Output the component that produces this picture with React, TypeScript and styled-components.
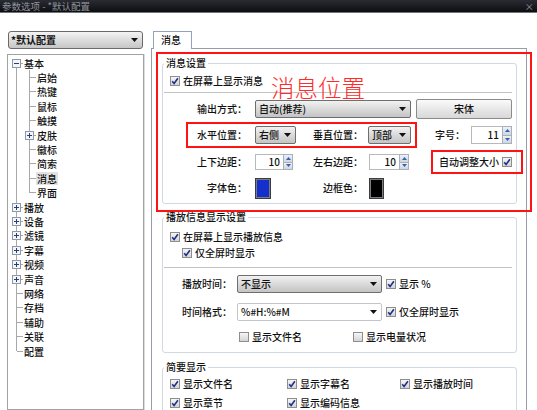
import styled, { createGlobalStyle } from 'styled-components';

const GlobalStyle = createGlobalStyle`
  html, body { margin: 0; padding: 0; background: #ffffff; }
  body {
    font-family: "Noto Sans CJK SC", "Noto Sans", sans-serif;
    font-size: 10px;
    font-weight: 500;
    line-height: 12px;
    color: #111111;
  }
  * { box-sizing: border-box; }
`;

const Window = styled.div`
  width: 537px;
  height: 410px;
  overflow: hidden;
  display: flex;
  flex-direction: column;
  background: #ffffff;
`;

const TitleBar = styled.div`
  flex: none;
  height: 13px;
  background: linear-gradient(#2a2c33, #0d0e11);
  border-bottom: 1px solid #70747c;
  display: flex;
  align-items: center;
  justify-content: space-between;
  padding: 0 3px 0 2px;
  color: #8f949d;
  font-size: 9.5px;
  line-height: 12px;
  font-weight: 400;
`;

const Body = styled.div`
  flex: 1;
  min-height: 0;
  display: flex;
  padding: 18px 0 0 7px;
`;

const LeftCol = styled.div`
  width: 137px;
  flex: none;
  display: flex;
  flex-direction: column;
`;

const ProfileSelect = styled.div`
  height: 18px;
  margin: 0 1px;
  border: 1px solid #6a6a6a;
  border-radius: 3px;
  background: linear-gradient(#f4f4f4, #dcdcdc 50%, #c6c6c6);
  display: flex;
  align-items: center;
  justify-content: space-between;
  padding: 0 4px 0 2px;
  font-weight: bold;
`;

const TreeBox = styled.div`
  flex: 1;
  margin-top: 5px;
  border: 1px solid #a2a2a2;
  box-shadow: 1px 0 0 #dcdcdc;
  padding: 1px 0 0 2px;
`;

const TreeRow = styled.div`
  height: 14.4px;
  display: flex;
  align-items: center;
`;

type Vert = 'full' | 'upper' | 'lower' | 'none';

const lineColor = '#a8a8a8';
const vertLayer = (v: Vert) => {
  const g = `linear-gradient(${lineColor}, ${lineColor})`;
  if (v === 'full') return `${g} 6px 0 / 1px 100% no-repeat`;
  if (v === 'upper') return `${g} 6px 0 / 1px 50% no-repeat`;
  if (v === 'lower') return `${g} 6px 100% / 1px 50% no-repeat`;
  return '';
};

const Guide = styled.span<{ $v: Vert; $stub?: boolean }>`
  width: 13px;
  height: 100%;
  flex: none;
  display: flex;
  align-items: center;
  justify-content: center;
  padding-right: 1px;
  background: ${({ $v, $stub }) =>
    [
      $stub ? `linear-gradient(${lineColor}, ${lineColor}) 7px 50% / 6px 1px no-repeat` : '',
      vertLayer($v),
    ]
      .filter(Boolean)
      .join(', ') || 'none'};
`;

const TreeText = styled.span<{ $selected?: boolean }>`
  padding: 0 1px;
  line-height: 13px;
  background: ${({ $selected }) => ($selected ? '#e2e2e2' : 'transparent')};
`;

const RightCol = styled.div`
  width: 376px;
  flex: none;
  margin-left: 7px;
  display: flex;
  flex-direction: column;
`;

const TabStrip = styled.div`
  height: 17px;
  flex: none;
  display: flex;
  padding-left: 2px;
`;

const Tab = styled.div`
  width: 39px;
  height: 18px;
  position: relative;
  z-index: 1;
  border: 1px solid #95a3b8;
  border-bottom: 0;
  background: #ffffff;
  padding-left: 7px;
  line-height: 16px;
`;

const TabPage = styled.div`
  flex: 1;
  border: 1px solid #969ca8;
  border-bottom: 0;
  padding: 3px 9px 0 10px;
  display: flex;
  flex-direction: column;
`;

const MarkBox = styled.div`
  position: relative;
  margin: 0 -15px 0 -6px;
  padding: 3px 13px 6px 4px;
  border: 2px solid #ff1212;
`;

const MarkText = styled.div`
  position: absolute;
  left: 113px;
  top: 23px;
  font-size: 23.5px;
  line-height: 20px;
  font-weight: 300;
  color: #ff2a2a;
  pointer-events: none;
`;

const Group = styled.fieldset<{ $mt?: number; $pt: number; $pb: number }>`
  margin: ${({ $mt }) => $mt ?? 0}px 0 0 0;
  min-width: 0;
  border: 1px solid #d3d9e1;
  border-radius: 3px;
  padding: ${({ $pt }) => $pt}px 0 ${({ $pb }) => $pb}px 0;
`;

const Legend = styled.legend`
  padding: 0 2px;
  margin-left: 1px;
  line-height: 12px;
`;

const Separator = styled.div<{ $mt: number }>`
  height: 1px;
  margin: ${({ $mt }) => $mt}px 4px 0 1px;
  background: #c2c2c2;
`;

const Row = styled.div<{ $h: number; $mt?: number; $pl?: number }>`
  display: flex;
  align-items: center;
  height: ${({ $h }) => $h}px;
  margin-top: ${({ $mt }) => $mt ?? 0}px;
  padding-left: ${({ $pl }) => $pl ?? 0}px;
`;

const Label = styled.span<{ $w: number; $gap?: number }>`
  width: ${({ $w }) => $w}px;
  margin-right: ${({ $gap }) => $gap ?? 8}px;
  flex: none;
  text-align: right;
  white-space: nowrap;
`;

const Combo = styled.div<{ $w: number; $h: number; $edit?: boolean }>`
  width: ${({ $w }) => $w}px;
  height: ${({ $h }) => $h}px;
  flex: none;
  display: flex;
  align-items: center;
  justify-content: space-between;
  padding: 0 4px 0 3px;
  border: 1px solid ${({ $edit }) => ($edit ? '#c2c6cc' : '#6e6e6e')};
  border-radius: 2px;
  background: ${({ $edit }) =>
    $edit ? '#ffffff' : 'linear-gradient(#f2f2f2, #dadada 50%, #c4c4c4)'};
  white-space: nowrap;
`;

const PushButton = styled.div`
  width: 96px;
  height: 20px;
  flex: none;
  margin-left: 5px;
  display: flex;
  align-items: center;
  justify-content: center;
  border: 1px solid #8b8b8b;
  border-radius: 2px;
  background: linear-gradient(#fbfbfb, #e6e6e6 55%, #d8d8d8);
`;

const SpinWrap = styled.div<{ $w: number; $h: number }>`
  width: ${({ $w }) => $w}px;
  height: ${({ $h }) => $h}px;
  flex: none;
  display: flex;
`;

const SpinField = styled.div`
  flex: 1;
  display: flex;
  align-items: center;
  justify-content: flex-end;
  padding-right: 3px;
  border: 1px solid #b9b9b9;
  border-right: 0;
  background: #ffffff;
`;

const SpinButtons = styled.div`
  width: 10px;
  display: flex;
  flex-direction: column;
  border: 1px solid #a9b0bb;
`;

const SpinHalf = styled.div`
  flex: 1;
  display: flex;
  align-items: center;
  justify-content: center;
  background: linear-gradient(#eef1f5, #cfd6df);
  & + & { border-top: 1px solid #a9b0bb; }
`;

const Swatch = styled.div<{ $color: string; $w: number }>`
  width: ${({ $w }) => $w}px;
  height: 21px;
  flex: none;
  border: 1px solid #3c3c3c;
  box-shadow: inset 0 0 0 1px #7d7d7d;
  background: ${({ $color }) => $color};
`;

const MarkInline = styled.div<{ $ml?: number; $pad: string; $h: number }>`
  display: flex;
  align-items: center;
  flex: none;
  height: ${({ $h }) => $h}px;
  margin-left: ${({ $ml }) => $ml ?? 0}px;
  padding: ${({ $pad }) => $pad};
  border: 2px solid #ff1212;
`;

const CheckItem = styled.label<{ $ml?: number }>`
  display: inline-flex;
  align-items: center;
  flex: none;
  gap: 3px;
  height: 14px;
  margin-left: ${({ $ml }) => $ml ?? 0}px;
  white-space: nowrap;
`;

const CheckBox = styled.span`
  width: 10px;
  height: 10px;
  flex: none;
  display: flex;
  align-items: center;
  justify-content: center;
  border: 1px solid #8e8e8e;
  background: linear-gradient(#f6f6f6, #d4d4d4);
`;

const CheckGrid = styled.div`
  display: grid;
  grid-template-columns: 117px 113px 1fr;
  row-gap: 5px;
  padding-left: 7px;
`;

const Arrow = () => (
  <svg width="7" height="4" viewBox="0 0 7 4">
    <polygon points="0,0 7,0 3.5,4" fill="#111" />
  </svg>
);

const Tick = () => (
  <svg width="8" height="8" viewBox="0 0 8 8">
    <path d="M1.2 4.2 L3.1 6.4 L6.9 1.2" fill="none" stroke="#1d2f8a" strokeWidth="1.6" />
  </svg>
);

const Expander = ({ open }: { open: boolean }) => (
  <svg width="9" height="9" viewBox="0 0 9 9">
    <rect x="0.5" y="0.5" width="8" height="8" fill="#f3f5f8" stroke="#8c99ad" />
    <line x1="2" y1="4.5" x2="7" y2="4.5" stroke="#2a3f7a" />
    {!open && <line x1="4.5" y1="2" x2="4.5" y2="7" stroke="#2a3f7a" />}
  </svg>
);

function Check({ label, checked = true, ml }: { label: string; checked?: boolean; ml?: number }) {
  return (
    <CheckItem $ml={ml}>
      <CheckBox>{checked && <Tick />}</CheckBox>
      {label}
    </CheckItem>
  );
}

function TailCheck({ label }: { label: string }) {
  return (
    <CheckItem>
      {label}
      <CheckBox>
        <Tick />
      </CheckBox>
    </CheckItem>
  );
}

function Spin({ value, w, h }: { value: string; w: number; h: number }) {
  return (
    <SpinWrap $w={w} $h={h}>
      <SpinField>{value}</SpinField>
      <SpinButtons>
        <SpinHalf>
          <svg width="5" height="3" viewBox="0 0 5 3">
            <polygon points="0,3 5,3 2.5,0" fill="#3460b4" />
          </svg>
        </SpinHalf>
        <SpinHalf>
          <svg width="5" height="3" viewBox="0 0 5 3">
            <polygon points="0,0 5,0 2.5,3" fill="#3460b4" />
          </svg>
        </SpinHalf>
      </SpinButtons>
    </SpinWrap>
  );
}

type Node = { label: string; level: 0 | 1; exp?: 'open' | 'closed'; selected?: boolean };

const tree: Node[] = [
  { label: '基本', level: 0, exp: 'open' },
  { label: '启始', level: 1 },
  { label: '热键', level: 1 },
  { label: '鼠标', level: 1 },
  { label: '触摸', level: 1 },
  { label: '皮肤', level: 1, exp: 'closed' },
  { label: '徽标', level: 1 },
  { label: '简索', level: 1 },
  { label: '消息', level: 1, selected: true },
  { label: '界面', level: 1 },
  { label: '播放', level: 0, exp: 'closed' },
  { label: '设备', level: 0, exp: 'closed' },
  { label: '滤镜', level: 0, exp: 'closed' },
  { label: '字幕', level: 0, exp: 'closed' },
  { label: '视频', level: 0, exp: 'closed' },
  { label: '声音', level: 0, exp: 'closed' },
  { label: '网络', level: 0 },
  { label: '存档', level: 0 },
  { label: '辅助', level: 0 },
  { label: '关联', level: 0 },
  { label: '配置', level: 0 },
];

function Tree() {
  return (
    <TreeBox>
      {tree.map((n, i) => {
        const first = i === 0;
        const last = i === tree.length - 1;
        const nextIsChild = tree[i + 1]?.level === 1;
        const lastChild = n.level === 1 && !nextIsChild;
        return (
          <TreeRow key={n.label}>
            {n.level === 0 ? (
              <Guide $v={first ? 'lower' : last ? 'upper' : 'full'} $stub>
                {n.exp && <Expander open={n.exp === 'open'} />}
              </Guide>
            ) : (
              <>
                <Guide $v="full" />
                <Guide $v={lastChild ? 'upper' : 'full'} $stub>
                  {n.exp && <Expander open={false} />}
                </Guide>
              </>
            )}
            <TreeText $selected={n.selected}>{n.label}</TreeText>
          </TreeRow>
        );
      })}
    </TreeBox>
  );
}

export default function App() {
  return (
    <>
      <GlobalStyle />
      <Window>
        <TitleBar>
          <span>参数选项 - *默认配置</span>
          <span>×</span>
        </TitleBar>
        <Body>
          <LeftCol>
            <ProfileSelect>
              <span>*默认配置</span>
              <Arrow />
            </ProfileSelect>
            <Tree />
          </LeftCol>

          <RightCol>
            <TabStrip>
              <Tab>消息</Tab>
            </TabStrip>
            <TabPage>
              <MarkBox>
                <MarkText>消息位置</MarkText>
                <Group $pt={5} $pb={4}>
                  <Legend>消息设置</Legend>
                  <Row $h={14} $pl={7}>
                    <Check label="在屏幕上显示消息" />
                  </Row>
                  <Separator $mt={4} />
                  <Row $h={20} $mt={6}>
                    <Label $w={84}>输出方式：</Label>
                    <Combo $w={156} $h={18}>
                      <span>自动(推荐)</span>
                      <Arrow />
                    </Combo>
                    <PushButton>宋体</PushButton>
                  </Row>
                  <Row $h={26} $mt={3}>
                    <MarkInline $ml={23} $pad="0 4px 0 0" $h={26}>
                      <Label $w={59}>水平位置：</Label>
                      <Combo $w={41} $h={18}>
                        <span>右侧</span>
                        <Arrow />
                      </Combo>
                      <Label $w={67} $gap={5}>垂直位置：</Label>
                      <Combo $w={43} $h={18}>
                        <span>顶部</span>
                        <Arrow />
                      </Combo>
                    </MarkInline>
                    <Label $w={48} $gap={6}>字号：</Label>
                    <Spin value="11" w={41} h={18} />
                  </Row>
                  <Row $h={24} $mt={2}>
                    <Label $w={84}>上下边距：</Label>
                    <Spin value="10" w={38} h={16} />
                    <Label $w={70} $gap={6}>左右边距：</Label>
                    <Spin value="10" w={40} h={16} />
                    <MarkInline $ml={22} $pad="0 9px 0 6px" $h={24}>
                      <TailCheck label="自动调整大小" />
                    </MarkInline>
                  </Row>
                  <Row $h={22} $mt={3}>
                    <Label $w={84}>字体色：</Label>
                    <Swatch $color="#1430cc" $w={16} />
                    <Label $w={92} $gap={6}>边框色：</Label>
                    <Swatch $color="#000000" $w={15} />
                  </Row>
                </Group>
              </MarkBox>

              <Group $mt={-1} $pt={7} $pb={8}>
                <Legend>播放信息显示设置</Legend>
                <Row $h={14} $pl={7}>
                  <Check label="在屏幕上显示播放信息" />
                </Row>
                <Row $h={14} $mt={2} $pl={19}>
                  <Check label="仅全屏时显示" />
                </Row>
                <Separator $mt={7} />
                <Row $h={18} $mt={7}>
                  <Label $w={69} $gap={5}>播放时间：</Label>
                  <Combo $w={145} $h={18}>
                    <span>不显示</span>
                    <Arrow />
                  </Combo>
                  <Check label="显示 %" ml={4} />
                </Row>
                <Row $h={18} $mt={10}>
                  <Label $w={69} $gap={5}>时间格式：</Label>
                  <Combo $w={145} $h={18} $edit>
                    <span>%#H:%#M</span>
                    <Arrow />
                  </Combo>
                  <Check label="仅全屏时显示" ml={4} />
                </Row>
                <Row $h={14} $mt={9} $pl={76}>
                  <Check label="显示文件名" checked={false} />
                  <Check label="显示电量状况" checked={false} ml={51} />
                </Row>
              </Group>

              <Group $mt={8} $pt={4} $pb={6}>
                <Legend>简要显示</Legend>
                <CheckGrid>
                  <Check label="显示文件名" />
                  <Check label="显示字幕名" />
                  <Check label="显示播放时间" />
                  <Check label="显示章节" />
                  <Check label="显示编码信息" />
                </CheckGrid>
              </Group>
            </TabPage>
          </RightCol>
        </Body>
      </Window>
    </>
  );
}
